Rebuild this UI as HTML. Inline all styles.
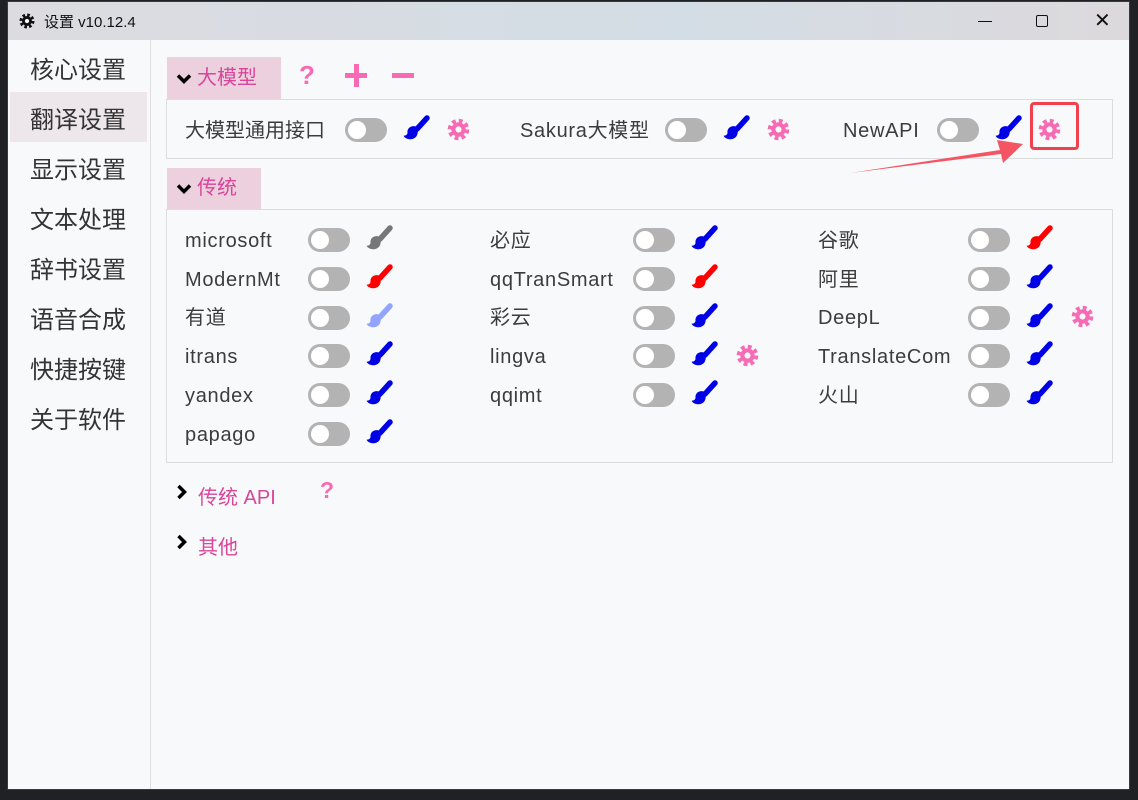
<!DOCTYPE html>
<html><head><meta charset="utf-8"><style>
*{margin:0;padding:0;box-sizing:border-box}
body{width:1138px;height:800px;background:#202124;position:relative;overflow:hidden;font-family:"Liberation Sans","Noto Sans CJK SC",sans-serif}
.win{position:absolute;left:7px;top:1px;width:1123px;height:789px;background:#f8f9fb;border:1px solid #3a3a3a}
.title{position:absolute;left:0;top:0;width:100%;height:38px;background:linear-gradient(90deg,#dcdce0 0%,#d3dde5 60%,#dcd9dc 100%);}
.a{position:absolute}
.side{font-size:24px;color:#333;left:22px}
.t{font-size:20px;color:#3c3c3c;position:absolute;line-height:24px;letter-spacing:0.7px}
.tg{position:absolute;width:42px;height:24px;border-radius:12px;background:#b3b3b3}
.tg::after{content:"";position:absolute;left:3px;top:3px;width:18px;height:18px;border-radius:50%;background:#fff}
.hdr{position:absolute;background:#ecd0de;color:#d9459a;font-size:20px;line-height:42px;padding-left:30px}
.frame{position:absolute;border:1px solid #dcdcdc}
.pk{color:#d9459a;font-size:20px;position:absolute}
</style></head><body>
<svg width="0" height="0" style="position:absolute"><defs>
<symbol id="br" viewBox="0 0 28 28"><path d="M25 3 L15 14" stroke="currentColor" stroke-width="5.5" stroke-linecap="round"/><path d="M14 11.5c-4.5-1.5-9 1.5-8.5 6 0 2-1.5 3.2-4 3.2 2.5 4.5 11 5 13.5-.5 1.3-3 1-6.5-1-8.7z" fill="currentColor"/></symbol>
<symbol id="gr" viewBox="0 0 24 24"><circle cx="12" cy="12" r="9" fill="none" stroke="currentColor" stroke-width="4.5" stroke-dasharray="3.9 3.17"/><circle cx="12" cy="12" r="7.5" fill="currentColor"/><circle cx="12" cy="12" r="3.2" fill="#f8f9fb"/></symbol>
<symbol id="chd" viewBox="0 0 16 16"><path d="M2 4.5 L8 10.5 L14 4.5" stroke="#000" stroke-width="3.5" fill="none"/></symbol>
<symbol id="chr" viewBox="0 0 16 16"><path d="M4.5 2 L10.5 8 L4.5 14" stroke="#000" stroke-width="3.5" fill="none"/></symbol>
</defs></svg>
<div class="win">
<div class="title">
<svg class="a" style="left:11px;top:11px;color:#111" width="16" height="16"><use href="#gr"/></svg>
<div class="a" style="left:36px;top:9px;font-size:15px;color:#111">设置 v10.12.4</div>
<div class="a" style="left:970px;top:19px;width:14px;height:1px;background:#111"></div>
<div class="a" style="left:1028px;top:13px;width:12px;height:12px;border:1.5px solid #111;border-radius:2px"></div>
<div class="a" style="left:1086px;top:9px;font-size:20px;color:#111;line-height:20px">✕</div>
</div>
</div>
<div class="a" style="left:150px;top:40px;width:1px;height:749px;background:#dedede"></div>
<div class="a" style="left:10px;top:92px;width:137px;height:50px;background:#ede6ea"></div>
<div class="a side" style="left:30px;top:50px">核心设置</div>
<div class="a side" style="left:30px;top:100px">翻译设置</div>
<div class="a side" style="left:30px;top:150px">显示设置</div>
<div class="a side" style="left:30px;top:200px">文本处理</div>
<div class="a side" style="left:30px;top:250px">辞书设置</div>
<div class="a side" style="left:30px;top:300px">语音合成</div>
<div class="a side" style="left:30px;top:350px">快捷按键</div>
<div class="a side" style="left:30px;top:400px">关于软件</div>

<div class="hdr" style="left:167px;top:57px;width:114px;height:42px">大模型</div>
<svg class="a" style="left:176px;top:71px" width="16" height="16"><use href="#chd"/></svg>
<div class="a" style="left:299px;top:60px;font-size:26px;font-weight:bold;color:#f76ab4">?</div>
<div class="a" style="left:345px;top:73px;width:22px;height:5px;background:#f76ab4"></div>
<div class="a" style="left:354px;top:64px;width:5px;height:23px;background:#f76ab4"></div>
<div class="a" style="left:392px;top:73px;width:22px;height:5px;background:#f76ab4"></div>
<div class="frame" style="left:166px;top:99px;width:947px;height:60px"></div>
<div class="t" style="left:185px;top:119px;letter-spacing:0">大模型通用接口</div>
<div class="tg" style="left:345px;top:118px"></div>
<svg class="a" style="left:402px;top:115px;color:#0000e6" width="28" height="28"><use href="#br"/></svg>
<svg class="a" style="left:447px;top:118px;color:#f76ab4" width="23" height="23"><use href="#gr"/></svg>
<div class="t" style="left:520px;top:119px">Sakura大模型</div>
<div class="tg" style="left:665px;top:118px"></div>
<svg class="a" style="left:722px;top:115px;color:#0000e6" width="28" height="28"><use href="#br"/></svg>
<svg class="a" style="left:767px;top:118px;color:#f76ab4" width="23" height="23"><use href="#gr"/></svg>
<div class="t" style="left:843px;top:119px">NewAPI</div>
<div class="tg" style="left:937px;top:118px"></div>
<svg class="a" style="left:994px;top:115px;color:#0000e6" width="28" height="28"><use href="#br"/></svg>
<svg class="a" style="left:1038px;top:118px;color:#f76ab4" width="23" height="23"><use href="#gr"/></svg>
<div class="a" style="left:1030px;top:102px;width:49px;height:48px;border:3.5px solid #f2404f;border-radius:4px"></div>
<svg class="a" style="left:0;top:0" width="1138" height="800"><path d="M850 173 L1000 150 L997 140 L1023 144 L1003 163 L1001 154 Z" fill="#f55563"/></svg>

<div class="hdr" style="left:167px;top:168px;width:94px;height:41px;line-height:41px">传统</div>
<svg class="a" style="left:176px;top:181px" width="16" height="16"><use href="#chd"/></svg>
<div class="frame" style="left:166px;top:209px;width:947px;height:254px"></div>

<div class="t" style="left:185px;top:229px">microsoft</div><div class="tg" style="left:308px;top:228px"></div><svg class="a" style="left:365px;top:225px;color:#777" width="28" height="28"><use href="#br"/></svg>
<div class="t" style="left:185px;top:268px">ModernMt</div><div class="tg" style="left:308px;top:267px"></div><svg class="a" style="left:365px;top:264px;color:#f00" width="28" height="28"><use href="#br"/></svg>
<div class="t" style="left:185px;top:306px">有道</div><div class="tg" style="left:308px;top:306px"></div><svg class="a" style="left:365px;top:303px;color:#92a4ff" width="28" height="28"><use href="#br"/></svg>
<div class="t" style="left:185px;top:345px">itrans</div><div class="tg" style="left:308px;top:344px"></div><svg class="a" style="left:365px;top:341px;color:#0000e6" width="28" height="28"><use href="#br"/></svg>
<div class="t" style="left:185px;top:384px">yandex</div><div class="tg" style="left:308px;top:383px"></div><svg class="a" style="left:365px;top:380px;color:#0000e6" width="28" height="28"><use href="#br"/></svg>
<div class="t" style="left:185px;top:423px">papago</div><div class="tg" style="left:308px;top:422px"></div><svg class="a" style="left:365px;top:419px;color:#0000e6" width="28" height="28"><use href="#br"/></svg>

<div class="t" style="left:490px;top:229px">必应</div><div class="tg" style="left:633px;top:228px"></div><svg class="a" style="left:690px;top:225px;color:#0000e6" width="28" height="28"><use href="#br"/></svg>
<div class="t" style="left:490px;top:268px">qqTranSmart</div><div class="tg" style="left:633px;top:267px"></div><svg class="a" style="left:690px;top:264px;color:#f00" width="28" height="28"><use href="#br"/></svg>
<div class="t" style="left:490px;top:306px">彩云</div><div class="tg" style="left:633px;top:306px"></div><svg class="a" style="left:690px;top:303px;color:#0000e6" width="28" height="28"><use href="#br"/></svg>
<div class="t" style="left:490px;top:345px">lingva</div><div class="tg" style="left:633px;top:344px"></div><svg class="a" style="left:690px;top:341px;color:#0000e6" width="28" height="28"><use href="#br"/></svg><svg class="a" style="left:736px;top:344px;color:#f76ab4" width="23" height="23"><use href="#gr"/></svg>
<div class="t" style="left:490px;top:384px">qqimt</div><div class="tg" style="left:633px;top:383px"></div><svg class="a" style="left:690px;top:380px;color:#0000e6" width="28" height="28"><use href="#br"/></svg>

<div class="t" style="left:818px;top:229px">谷歌</div><div class="tg" style="left:968px;top:228px"></div><svg class="a" style="left:1025px;top:225px;color:#f00" width="28" height="28"><use href="#br"/></svg>
<div class="t" style="left:818px;top:268px">阿里</div><div class="tg" style="left:968px;top:267px"></div><svg class="a" style="left:1025px;top:264px;color:#0000e6" width="28" height="28"><use href="#br"/></svg>
<div class="t" style="left:818px;top:306px">DeepL</div><div class="tg" style="left:968px;top:306px"></div><svg class="a" style="left:1025px;top:303px;color:#0000e6" width="28" height="28"><use href="#br"/></svg><svg class="a" style="left:1071px;top:305px;color:#f76ab4" width="23" height="23"><use href="#gr"/></svg>
<div class="t" style="left:818px;top:345px">TranslateCom</div><div class="tg" style="left:968px;top:344px"></div><svg class="a" style="left:1025px;top:341px;color:#0000e6" width="28" height="28"><use href="#br"/></svg>
<div class="t" style="left:818px;top:384px">火山</div><div class="tg" style="left:968px;top:383px"></div><svg class="a" style="left:1025px;top:380px;color:#0000e6" width="28" height="28"><use href="#br"/></svg>

<svg class="a" style="left:174px;top:484px" width="16" height="16"><use href="#chr"/></svg>
<div class="pk" style="left:198px;top:481px">传统 API</div>
<div class="a" style="left:320px;top:477px;font-size:23px;font-weight:bold;color:#f76ab4">?</div>
<svg class="a" style="left:174px;top:534px" width="16" height="16"><use href="#chr"/></svg>
<div class="pk" style="left:198px;top:531px">其他</div>
</body></html>
